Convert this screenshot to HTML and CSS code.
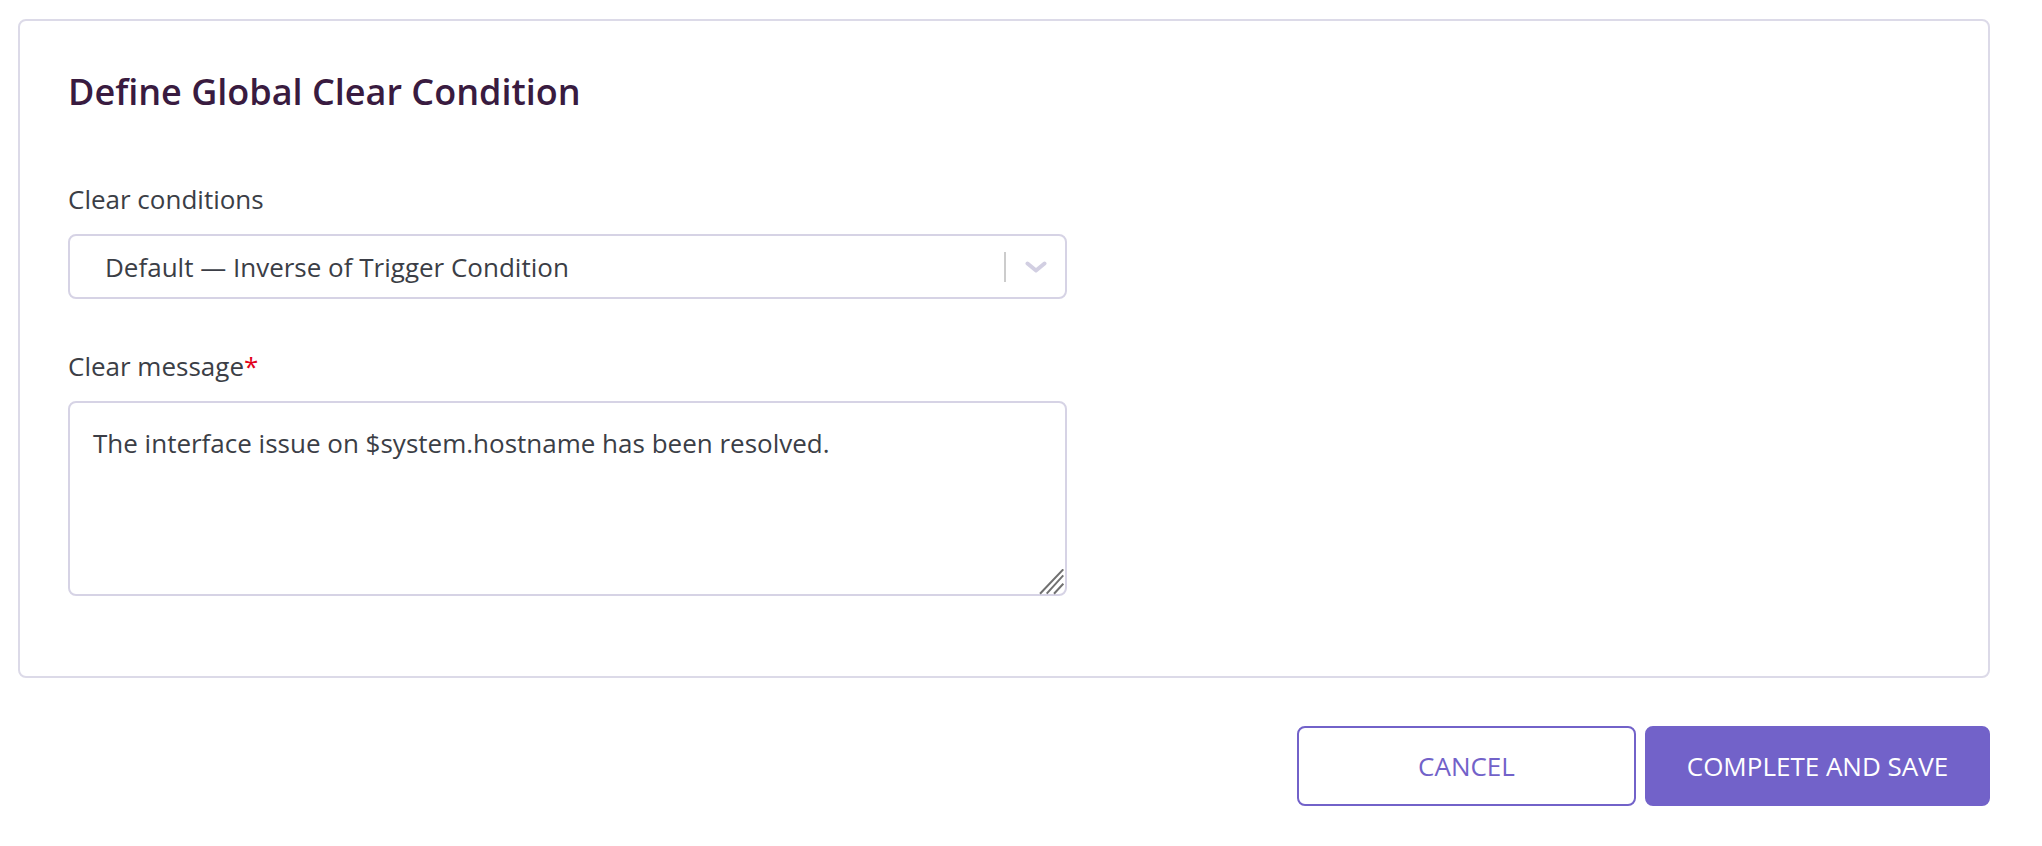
FILE: index.html
```html
<!DOCTYPE html>
<html lang="en">
<head>
<meta charset="utf-8">
<title>Define Global Clear Condition</title>
<link rel="stylesheet" href="styles.css">
</head>
<body>
<div class="page">
  <section class="card">
    <h2 class="card-title">Define Global Clear Condition</h2>
    <div class="field field-first">
      <label class="field-label">Clear conditions</label>
      <div class="select">
        <span class="select-value">Default — Inverse of Trigger Condition</span>
        <span class="select-indicators">
          <span class="select-sep"></span>
          <svg class="select-chevron" width="22" height="12" viewBox="0 0 22 12" aria-hidden="true">
            <path d="M2.5 2.5 L11 9.5 L19.5 2.5" fill="none" stroke="#d2cfe2" stroke-width="4" stroke-linecap="round" stroke-linejoin="round"/>
          </svg>
        </span>
      </div>
    </div>
    <div class="field">
      <label class="field-label">Clear message<span class="req">*</span></label>
      <div class="textarea-wrap">
        <textarea class="textarea">The interface issue on $system.hostname has been resolved.</textarea>
        <svg class="resize-grip" width="26" height="26" viewBox="0 0 26 26" aria-hidden="true">
          <path d="M2 24.7 L25.3 0.3 M8.7 24.7 L25.3 6.3 M16 24.7 L25.3 14.7" fill="none" stroke="#717171" stroke-width="2"/>
        </svg>
      </div>
    </div>
  </section>
  <div class="actions">
    <button class="btn btn-outline" type="button">CANCEL</button>
    <button class="btn btn-primary" type="button">COMPLETE AND SAVE</button>
  </div>
</div>
</body>
</html>
```

FILE: styles.css
```css
* {
  box-sizing: border-box;
}

body {
  margin: 0;
  background: #ffffff;
  font-family: "Open Sans", "Noto Sans", sans-serif;
  color: #3b3e46;
}

.page {
  margin: 19px 52px 0 18px;
}

.card {
  border: 2px solid #dcdae8;
  border-radius: 8px;
  padding: 47px 48px 80px;
}

.card-title {
  margin: 0;
  font-size: 36px;
  line-height: 48px;
  font-weight: 600;
  color: #391b40;
}

.field {
  margin-top: 49px;
}

.field-first {
  margin-top: 65px;
}

.field-label {
  display: block;
  font-size: 26px;
  line-height: 36px;
  margin-bottom: 17px;
  color: #3b3e46;
}

.req {
  color: #e2001a;
}

.select {
  width: 999px;
  height: 65px;
  border: 2px solid #d6d3e5;
  border-radius: 8px;
  display: flex;
  align-items: center;
  padding-left: 35px;
  background: #fff;
}

.select-value {
  flex: 1;
  font-size: 26px;
  line-height: 36px;
  color: #3b3e46;
}

.select-indicators {
  display: flex;
  align-items: center;
  gap: 19px;
  padding-right: 18px;
}

.select-sep {
  width: 2px;
  height: 30px;
  background: #cccccc;
}

.select-chevron {
  display: block;
}

.textarea-wrap {
  position: relative;
  width: 999px;
}

.textarea {
  display: block;
  width: 100%;
  height: 195px;
  margin: 0;
  border: 2px solid #d6d3e5;
  border-radius: 8px;
  padding: 22px 23px 13px;
  font-family: inherit;
  font-size: 26px;
  line-height: 36px;
  color: #3b3e46;
  resize: none;
  outline: none;
}

.resize-grip {
  position: absolute;
  right: 3px;
  bottom: 1px;
}

.actions {
  margin-top: 48px;
  display: flex;
  justify-content: flex-end;
  gap: 9px;
}

.btn {
  height: 80px;
  border: 2px solid #7262c9;
  border-radius: 8px;
  font-family: inherit;
  font-size: 26px;
  line-height: 36px;
  padding: 0;
  cursor: pointer;
}

.btn-outline {
  width: 339px;
  background: #ffffff;
  color: #7262c9;
}

.btn-primary {
  width: 345px;
  background: #7262c9;
  color: #ffffff;
}
```
